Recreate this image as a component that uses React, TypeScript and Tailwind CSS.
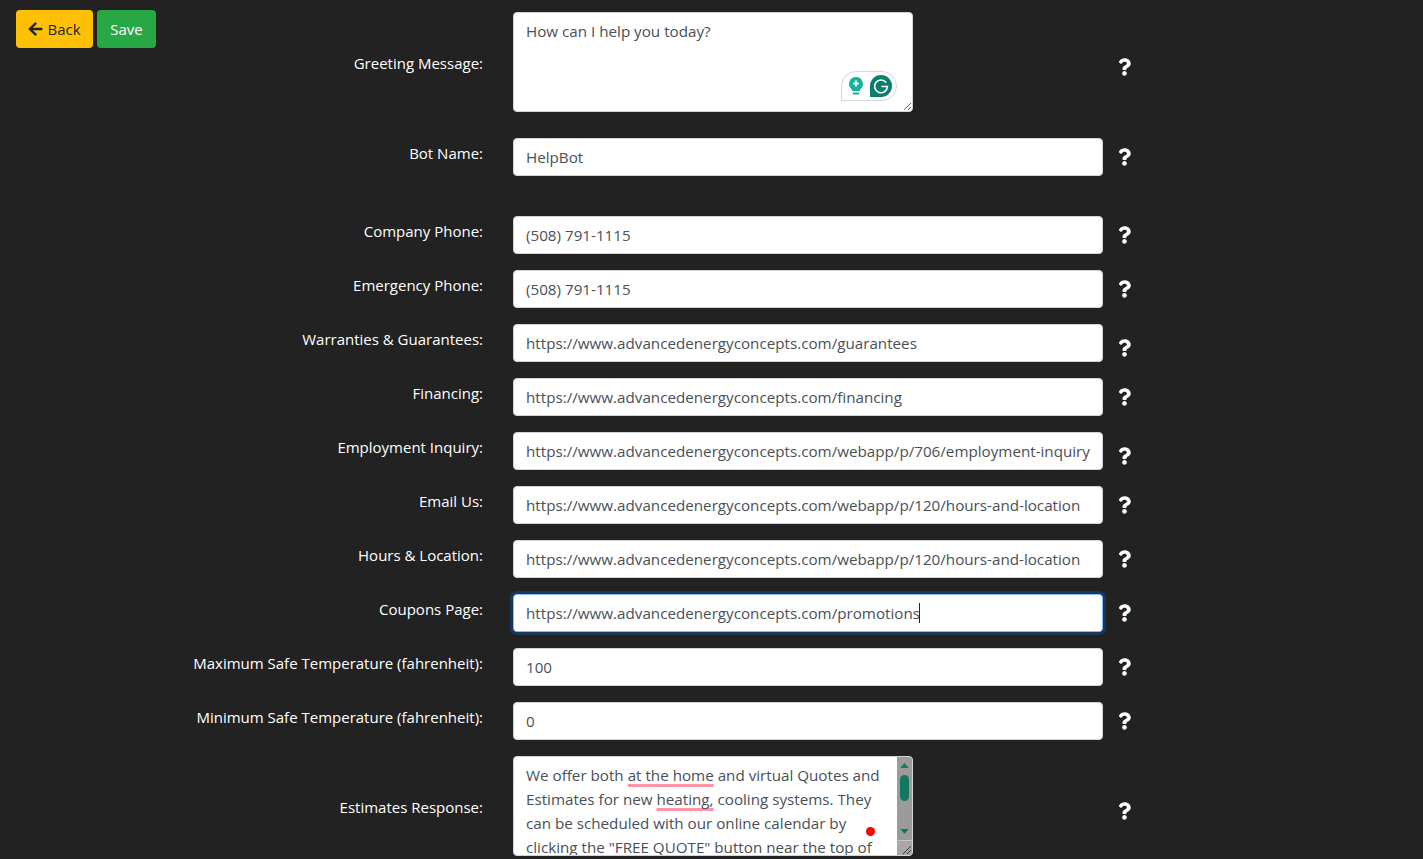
import { FaArrowLeft, FaQuestion } from "react-icons/fa";

const rows = [
  { label: "Company Phone:", value: "(508) 791-1115" },
  { label: "Emergency Phone:", value: "(508) 791-1115" },
  { label: "Warranties & Guarantees:", value: "https://www.advancedenergyconcepts.com/guarantees", low: true },
  { label: "Financing:", value: "https://www.advancedenergyconcepts.com/financing" },
  { label: "Employment Inquiry:", value: "https://www.advancedenergyconcepts.com/webapp/p/706/employment-inquiry", low: true },
  { label: "Email Us:", value: "https://www.advancedenergyconcepts.com/webapp/p/120/hours-and-location" },
  { label: "Hours & Location:", value: "https://www.advancedenergyconcepts.com/webapp/p/120/hours-and-location" },
  { label: "Coupons Page:", value: "https://www.advancedenergyconcepts.com/promotions", focus: true },
  { label: "Maximum Safe Temperature (fahrenheit):", value: "100" },
  { label: "Minimum Safe Temperature (fahrenheit):", value: "0" },
];

function Help({ low }: { low?: boolean }) {
  return (
    <div className={low ? "ml-[15px] pt-[10px] text-white" : "ml-[15px] text-white"}>
      <FaQuestion className="block w-[13px] h-[18px]" />
    </div>
  );
}

function Label({ text }: { text: string }) {
  return (
    <div className="w-[483px] mr-[30px] shrink-0 text-right">
      <label className="block mb-2 text-white">{text}</label>
    </div>
  );
}

function GrammarlyBadge() {
  return (
    <div className="absolute left-[328px] top-[59px] w-[56px] h-[30px] flex items-center gap-[6px] pl-[6px] bg-white border border-[#d3d7e2] rounded-[15px] rounded-bl-none">
      <svg width="16" height="20" viewBox="0 0 16 20">
        <path d="M8 1a7 7 0 0 1 4 12.7V15H4v-1.3A7 7 0 0 1 8 1z" fill="#15b39b" />
        <rect x="4.500" y="16.500" width="7" height="2" rx="1" fill="#15b39b" />
        <path d="M8 4.500c.4 2 1 2.600 3 3-2 .4-2.600 1-3 3-.4-2-1-2.600-3-3 2-.4 2.600-1 3-3z" fill="#fff" stroke="#fff" />
      </svg>
      <svg width="22" height="22" viewBox="0 0 22 22">
        <path d="M11 0a11 11 0 0 1 0 22H0V11A11 11 0 0 1 11 0z" fill="#0a7f6c" />
        <path d="M16.200 7.600A6.400 6.400 0 1 0 17.400 11.500H11.500" fill="none" stroke="#fff" strokeWidth="1.600" />
      </svg>
    </div>
  );
}

function FakeScrollbar() {
  return (
    <div className="absolute right-0 top-0 bottom-0 w-[15px] flex flex-col bg-[#9b9b9b]">
      <div className="flex-1 flex flex-col items-center pt-[6px]">
        <svg width="9" height="5" viewBox="0 0 10 6" className="block">
          <path d="M5 0l5 6H0z" fill="#0f7a60" />
        </svg>
        <div className="mt-[7px] w-[9px] h-[26px] rounded-[5px] bg-[#14775f]" />
        <svg width="9" height="5" viewBox="0 0 10 6" className="block mt-auto mb-[6px]">
          <path d="M5 6L0 0h10z" fill="#0f7a60" />
        </svg>
      </div>
      <div className="h-[15px] bg-[#a8a8a8] border-t border-[#c4c4c4] flex items-end justify-end">
        <svg width="12" height="12" viewBox="0 0 12 12">
          <path d="M11 3l-8 8M11 7l-4 4" stroke="#333" strokeWidth="1" />
        </svg>
      </div>
    </div>
  );
}

export default function App() {
  return (
    <div className="relative h-[859px] overflow-hidden bg-[#222222] pt-3 text-[15px] leading-6 font-['Open_Sans',sans-serif]">
      <div className="absolute left-4 top-[10px] flex gap-1">
        <button className="h-[38px] w-[77px] flex items-center justify-center gap-[4px] rounded bg-[#ffc107] text-[#212529]">
          <FaArrowLeft className="w-[15px] h-[16px]" />
          Back
        </button>
        <button className="h-[38px] w-[59px] rounded bg-[#28a745] text-white">Save</button>
      </div>

      <div className="flex items-center mb-4">
        <Label text="Greeting Message:" />
        <div className="relative w-[400px] mb-[10px]">
          <textarea
            readOnly
            defaultValue="How can I help you today?"
            className="block w-full h-[100px] px-3 py-[6px] text-[15.2px] bg-white border border-[#ced4da] rounded text-[#495057] outline-none"
          />
          <GrammarlyBadge />
        </div>
        <div className="ml-[190px]">
          <Help />
        </div>
      </div>

      <div className="flex items-center mb-10">
        <Label text="Bot Name:" />
        <input
          readOnly
          defaultValue="HelpBot"
          className="w-[590px] h-[38px] px-3 text-[15.2px] bg-white border border-[#ced4da] rounded text-[#495057] outline-none"
        />
        <Help />
      </div>

      {rows.map((row) => (
        <div key={row.label} className="flex items-center mb-4">
          <Label text={row.label} />
          <div className="relative w-[590px]">
            <input
              readOnly
              defaultValue={row.value}
              className={
                row.focus
                  ? "block w-full h-[38px] px-3 text-[15.2px] bg-white border border-[#80bdff] rounded text-[#495057] outline-none shadow-[0_0_0_3px_rgba(0,123,255,0.25)]"
                  : "block w-full h-[38px] px-3 text-[15.2px] bg-white border border-[#ced4da] rounded text-[#495057] outline-none"
              }
            />
            {row.focus && <div className="absolute left-[406px] top-[9px] w-px h-5 bg-[#222]" />}
          </div>
          <Help low={row.low} />
        </div>
      ))}

      <div className="flex items-center">
        <Label text="Estimates Response:" />
        <div className="relative w-[400px] h-[100px] mb-[10px] overflow-hidden bg-white border border-[#ced4da] rounded">
          <div className="pl-3 pr-[28px] pt-[6px] text-[15.2px] text-[#495057]">
            We offer both{" "}
            <span className="underline decoration-[#ff93a8] decoration-[3px] underline-offset-[3px] [text-decoration-skip-ink:none]">at the home</span> and
            virtual Quotes and Estimates for new{" "}
            <span className="underline decoration-[#ff93a8] decoration-[3px] underline-offset-[3px] [text-decoration-skip-ink:none]">heating,</span> cooling
            systems. They can be scheduled with our online calendar by clicking the "FREE QUOTE" button near the top of
          </div>
          <FakeScrollbar />
          <div className="absolute left-[352px] top-[70px] w-[9px] h-[9px] rounded-full bg-[#f00]" />
        </div>
        <div className="ml-[190px]">
          <Help />
        </div>
      </div>
    </div>
  );
}
